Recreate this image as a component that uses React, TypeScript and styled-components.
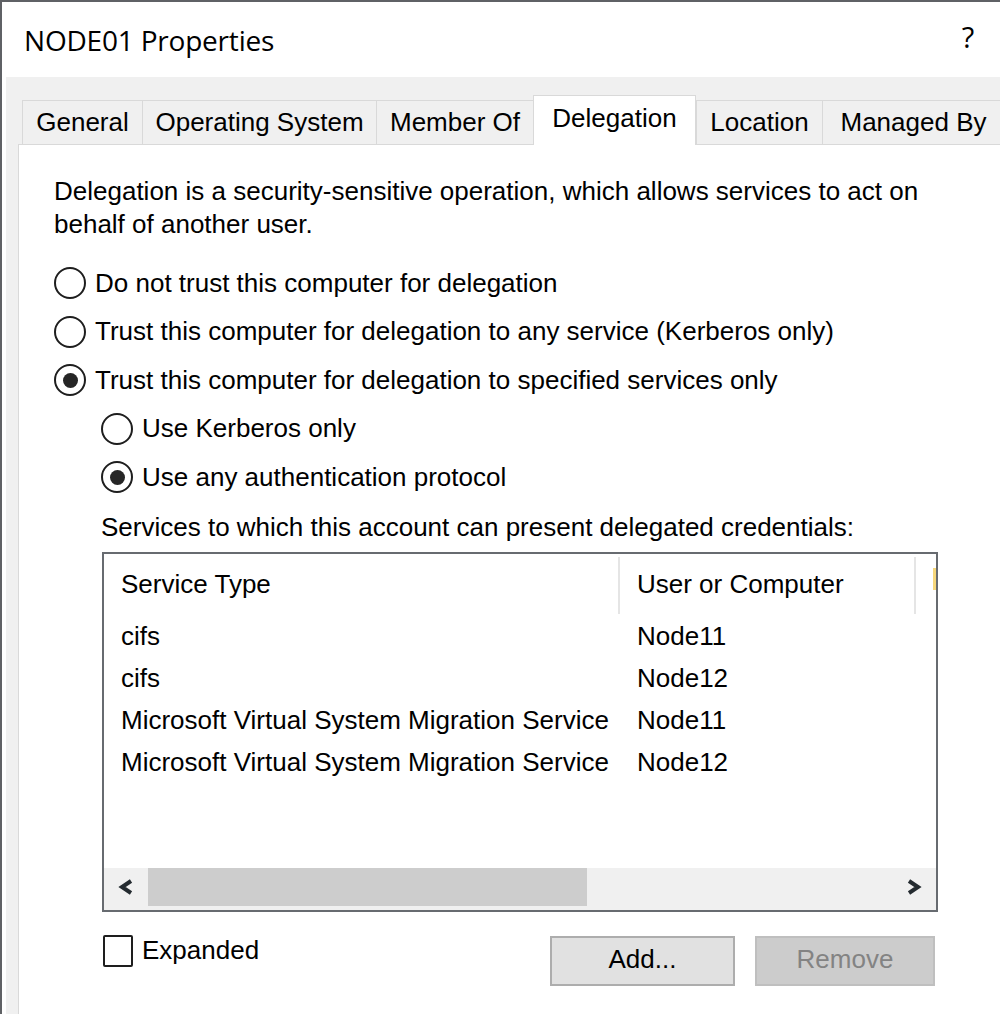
import React from "react";
import styled, { createGlobalStyle } from "styled-components";

const GlobalStyle = createGlobalStyle`
  html, body {
    margin: 0;
    padding: 0;
    width: 1000px;
    height: 1014px;
    overflow: hidden;
    background: #ffffff;
  }
  #root {
    width: 1000px;
    height: 1014px;
    overflow: hidden;
  }
`;

const UI_FONT = `"Liberation Sans", Arial, sans-serif`;
const TITLE_FONT = `"Open Sans", "Noto Sans", sans-serif`;

const Window = styled.div`
  width: 1040px;
  height: 1100px;
  box-sizing: border-box;
  display: flex;
  flex-direction: column;
  background: #ffffff;
  border-top: 2px solid #5f6165;
  border-left: 2px solid #5f6165;
  font-family: ${UI_FONT};
  font-size: 26px;
  color: #000000;
`;

const TitleBar = styled.div`
  height: 75px;
  flex: none;
  display: flex;
  align-items: center;
  padding-left: 22px;
`;

const Title = styled.div`
  flex: 1;
  font-family: ${TITLE_FONT};
  font-size: 28px;
  letter-spacing: -0.2px;
  color: #000;
`;

const TitleButton = styled.div<{ $w: number }>`
  width: ${(p) => p.$w}px;
  height: 100%;
  display: flex;
  align-items: center;
  justify-content: center;
  font-family: ${TITLE_FONT};
  font-size: 29px;
  padding-bottom: 6px;
  box-sizing: border-box;
`;

const Body = styled.div`
  flex: 1;
  margin-left: 4px;
  background: #f0f0f0;
  padding: 18px 18px 0 12px;
  display: flex;
  flex-direction: column;
`;

const TabStrip = styled.div`
  height: 49px;
  display: flex;
  align-items: flex-start;
  padding-left: 4px;
  position: relative;
  z-index: 1;
`;

const Tab = styled.div<{ $w: number; $active?: boolean }>`
  width: ${(p) => p.$w}px;
  box-sizing: border-box;
  height: ${(p) => (p.$active ? 50 : 44)}px;
  margin-top: ${(p) => (p.$active ? 0 : 5)}px;
  display: flex;
  align-items: center;
  justify-content: center;
  padding-bottom: ${(p) => (p.$active ? 4 : 0)}px;
  background: ${(p) => (p.$active ? "#ffffff" : "#f0f0f0")};
  border: 1px solid #d9d9d9;
  border-bottom: none;
  ${(p) => (p.$active ? "" : "border-right: none;")}
  flex: none;
  white-space: nowrap;
`;

const Panel = styled.div`
  flex: 1;
  background: #ffffff;
  border: 1px solid #d9d9d9;
  padding: 30px 0 0 35px;
  display: flex;
  flex-direction: column;
  align-items: flex-start;
`;

const Intro = styled.p`
  margin: 0;
  line-height: 33px;
  width: 900px;
`;

const RadioGroup = styled.div`
  margin-top: 18px;
  display: flex;
  flex-direction: column;
`;

const RadioRow = styled.label<{ $indent?: boolean }>`
  height: 48.5px;
  display: flex;
  align-items: center;
  gap: 9px;
  padding-left: ${(p) => (p.$indent ? 47 : 0)}px;
  white-space: nowrap;
`;

const RadioCircle = styled.span<{ $checked?: boolean }>`
  width: 32px;
  height: 32px;
  box-sizing: border-box;
  border: 2.5px solid #1e1e1e;
  border-radius: 50%;
  display: flex;
  align-items: center;
  justify-content: center;
  flex: none;
  background: #fff;
  &::after {
    content: "";
    width: 15px;
    height: 15px;
    border-radius: 50%;
    background: #262626;
    display: ${(p) => (p.$checked ? "block" : "none")};
  }
`;

const ListLabel = styled.div`
  margin-top: 9px;
  margin-left: 47px;
  line-height: 33px;
  white-space: nowrap;
`;

const ListBox = styled.div`
  margin-top: 8px;
  margin-left: 48px;
  width: 836px;
  height: 360px;
  box-sizing: border-box;
  border: 2px solid #676b70;
  background: #ffffff;
  display: flex;
  flex-direction: column;
`;

const HeaderRow = styled.div`
  height: 62px;
  flex: none;
  display: flex;
`;

const HeaderCell = styled.div<{ $w?: number }>`
  ${(p) => (p.$w ? `width: ${p.$w}px; flex: none;` : "flex: 1;")}
  box-sizing: border-box;
  padding-left: 17px;
  display: flex;
  align-items: center;
  position: relative;
  white-space: nowrap;
  &::after {
    content: "";
    position: absolute;
    right: 0;
    top: 3px;
    bottom: 2px;
    width: 2px;
    background: #e5e5e5;
    display: ${(p) => (p.$w ? "block" : "none")};
  }
`;

const ColumnHint = styled.span`
  display: block;
  width: 3px;
  height: 22px;
  margin-top: -12px;
  background: #f6d77c;
`;

const DataRow = styled.div`
  height: 42px;
  flex: none;
  display: flex;
  align-items: center;
`;

const Cell = styled.div<{ $w: number }>`
  width: ${(p) => p.$w}px;
  flex: none;
  box-sizing: border-box;
  padding-left: 17px;
  white-space: nowrap;
`;

const ScrollBar = styled.div`
  margin-top: auto;
  height: 42px;
  flex: none;
  display: flex;
  background: #f0f0f0;
  padding: 0 0 4px 0;
  box-sizing: border-box;
`;

const ScrollArrow = styled.div`
  width: 44px;
  flex: none;
  display: flex;
  align-items: center;
  justify-content: center;
`;

const ScrollTrack = styled.div`
  flex: 1;
  display: flex;
`;

const ScrollThumb = styled.div`
  width: 439px;
  background: #cdcdcd;
`;

const Footer = styled.div`
  margin-top: 23px;
  margin-left: 48px;
  width: 833px;
  display: flex;
  align-items: flex-start;
`;

const CheckRow = styled.label`
  display: flex;
  align-items: center;
  gap: 9px;
  height: 32px;
  margin-left: 1px;
  flex: 1;
`;

const CheckBox = styled.span`
  width: 30px;
  height: 32px;
  box-sizing: border-box;
  border: 2.5px solid #1e1e1e;
  border-radius: 2px;
  background: #fff;
  flex: none;
`;

const Buttons = styled.div`
  display: flex;
  gap: 20px;
  margin-top: 1px;
`;

const Button = styled.button<{ $w: number }>`
  width: ${(p) => p.$w}px;
  height: 50px;
  box-sizing: border-box;
  font-family: ${UI_FONT};
  font-size: 26px;
  color: #000;
  background: #e1e1e1;
  border: 2px solid #adadad;
  border-radius: 0;
  padding: 0 0 2px 0;
  &:disabled {
    background: #cccccc;
    border-color: #bfbfbf;
    color: #838383;
  }
`;

const Chevron = ({ dir }: { dir: "left" | "right" }) => (
  <svg width="18" height="18" viewBox="0 0 18 18">
    <path
      d={dir === "left" ? "M14 3 L5 9 L14 15" : "M4 3 L13 9 L4 15"}
      fill="none"
      stroke="#242b30"
      strokeWidth="4"
      strokeLinejoin="miter"
    />
  </svg>
);

const tabs = [
  { label: "General", w: 120 },
  { label: "Operating System", w: 234 },
  { label: "Member Of", w: 157 },
  { label: "Delegation", w: 163, active: true },
  { label: "Location", w: 126 },
  { label: "Managed By", w: 182 },
];

const radios = [
  { label: "Do not trust this computer for delegation" },
  { label: "Trust this computer for delegation to any service (Kerberos only)" },
  { label: "Trust this computer for delegation to specified services only", checked: true },
  { label: "Use Kerberos only", indent: true },
  { label: "Use any authentication protocol", indent: true, checked: true },
];

const services = [
  { type: "cifs", target: "Node11" },
  { type: "cifs", target: "Node12" },
  { type: "Microsoft Virtual System Migration Service", target: "Node11" },
  { type: "Microsoft Virtual System Migration Service", target: "Node12" },
];

export default function App() {
  return (
    <>
      <GlobalStyle />
      <Window>
        <TitleBar>
          <Title>NODE01 Properties</Title>
          <TitleButton $w={46}>?</TitleButton>
          <TitleButton $w={49} />
        </TitleBar>
        <Body>
          <TabStrip>
            {tabs.map((t) => (
              <Tab key={t.label} $w={t.w} $active={t.active}>
                {t.label}
              </Tab>
            ))}
          </TabStrip>
          <Panel>
            <Intro>
              Delegation is a security-sensitive operation, which allows services to act on
              <br />
              behalf of another user.
            </Intro>
            <RadioGroup>
              {radios.map((r) => (
                <RadioRow key={r.label} $indent={r.indent}>
                  <RadioCircle $checked={r.checked} />
                  {r.label}
                </RadioRow>
              ))}
            </RadioGroup>
            <ListLabel>Services to which this account can present delegated credentials:</ListLabel>
            <ListBox>
              <HeaderRow>
                <HeaderCell $w={516}>Service Type</HeaderCell>
                <HeaderCell $w={296}>User or Computer</HeaderCell>
                <HeaderCell>
                  <ColumnHint />
                </HeaderCell>
              </HeaderRow>
              {services.map((s, i) => (
                <DataRow key={i}>
                  <Cell $w={516}>{s.type}</Cell>
                  <Cell $w={296}>{s.target}</Cell>
                </DataRow>
              ))}
              <ScrollBar>
                <ScrollArrow>
                  <Chevron dir="left" />
                </ScrollArrow>
                <ScrollTrack>
                  <ScrollThumb />
                </ScrollTrack>
                <ScrollArrow>
                  <Chevron dir="right" />
                </ScrollArrow>
              </ScrollBar>
            </ListBox>
            <Footer>
              <CheckRow>
                <CheckBox />
                Expanded
              </CheckRow>
              <Buttons>
                <Button $w={185}>Add...</Button>
                <Button $w={180} disabled>
                  Remove
                </Button>
              </Buttons>
            </Footer>
          </Panel>
        </Body>
      </Window>
    </>
  );
}
